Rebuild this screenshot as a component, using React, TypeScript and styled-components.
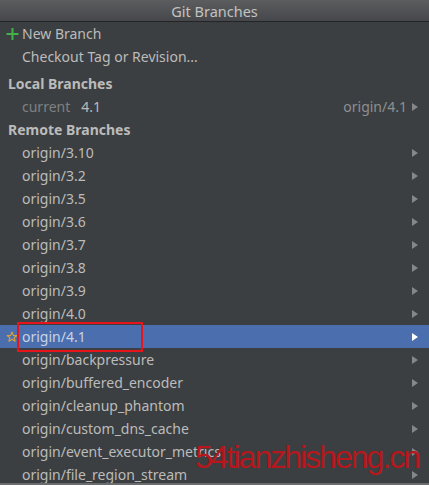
import React from "react";
import styled, { createGlobalStyle } from "styled-components";

const Global = createGlobalStyle`
  html, body { margin: 0; padding: 0; background: #3c3f41; }
  body { font-family: "Noto Sans", "Open Sans", sans-serif; }
`;

const Popup = styled.div`
  position: relative;
  width: 429px;
  height: 485px;
  overflow: hidden;
  background: #3c3f41;
  color: #bbbbbb;
  font-size: 14px;
  border-bottom: 2px solid #6a6c6e;
  box-sizing: border-box;
`;

const TitleBar = styled.div`
  height: 21px;
  display: flex;
  align-items: center;
  justify-content: center;
  background: linear-gradient(#5b5d5f, #45474a);
  border-bottom: 1px solid #232425;
  color: #c2c2c2;
  font-size: 14.5px;
`;

const List = styled.div`
  display: flex;
  flex-direction: column;
`;

const Row = styled.div<{ $selected?: boolean; $header?: boolean }>`
  position: relative;
  height: 23px;
  display: flex;
  align-items: center;
  padding-left: ${(p) => (p.$header ? 8 : 22)}px;
  padding-right: 11px;
  background: ${(p) => (p.$selected ? "#4b6eaf" : "transparent")};
  font-weight: ${(p) => (p.$header ? 700 : 400)};
  color: ${(p) => (p.$selected ? "#c9d3e4" : "#bbbbbb")};
`;

const Separator = styled.div`
  height: 4px;
`;

const Label = styled.span`
  flex: 1;
  white-space: nowrap;
`;

const Muted = styled.span`
  color: #7f8183;
  margin-right: 11px;
`;

const Remote = styled.span`
  color: #8d8f91;
  margin-right: 5px;
`;

const Arrow = styled.span<{ $selected?: boolean }>`
  width: 0;
  height: 0;
  border-top: 4px solid transparent;
  border-bottom: 4px solid transparent;
  border-left: 6px solid ${(p) => (p.$selected ? "#ffffff" : "#85878a")};
`;

const LeadIcon = styled.span`
  position: absolute;
  left: 6px;
  top: 50%;
  transform: translateY(-50%);
  display: flex;
`;

const Highlight = styled.div`
  position: absolute;
  left: 17px;
  top: 322px;
  width: 122px;
  height: 26px;
  border: 2px solid #e8141b;
`;

const Watermark = styled.div`
  position: absolute;
  left: 195px;
  top: 439px;
  font-family: "Liberation Sans", "Noto Sans", sans-serif;
  font-size: 32px;
  letter-spacing: -2px;
  color: #b7171c;
  white-space: nowrap;
`;

const Plus = () => (
  <svg width="13" height="13" viewBox="0 0 13 13">
    <rect x="5.5" y="0.5" width="2" height="12" fill="#44b04b" />
    <rect x="0.5" y="5.5" width="12" height="2" fill="#44b04b" />
  </svg>
);

const Star = () => (
  <svg width="12" height="12" viewBox="0 0 12 12">
    <path
      d="M6 1 L7.3 4.4 L10.9 4.5 L8.1 6.7 L9.1 10.2 L6 8.2 L2.9 10.2 L3.9 6.7 L1.1 4.5 L4.7 4.4 Z"
      fill="none"
      stroke="#d9a23e"
      strokeWidth="1.1"
      strokeLinejoin="round"
    />
  </svg>
);

const remotes = [
  "origin/3.10",
  "origin/3.2",
  "origin/3.5",
  "origin/3.6",
  "origin/3.7",
  "origin/3.8",
  "origin/3.9",
  "origin/4.0",
  "origin/4.1",
  "origin/backpressure",
  "origin/buffered_encoder",
  "origin/cleanup_phantom",
  "origin/custom_dns_cache",
  "origin/event_executor_metrics",
  "origin/file_region_stream",
];

export default function App() {
  return (
    <>
      <Global />
      <Popup>
        <TitleBar>Git Branches</TitleBar>
        <List>
          <Row>
            <LeadIcon>
              <Plus />
            </LeadIcon>
            <Label>New Branch</Label>
          </Row>
          <Row>
            <Label>Checkout Tag or Revision...</Label>
          </Row>
          <Separator />
          <Row $header>
            <Label>Local Branches</Label>
          </Row>
          <Row>
            <Muted>current</Muted>
            <Label>4.1</Label>
            <Remote>origin/4.1</Remote>
            <Arrow />
          </Row>
          <Row $header>
            <Label>Remote Branches</Label>
          </Row>
          {remotes.map((r) => {
            const sel = r === "origin/4.1";
            return (
              <Row key={r} $selected={sel}>
                {sel && (
                  <LeadIcon>
                    <Star />
                  </LeadIcon>
                )}
                <Label>{r}</Label>
                <Arrow $selected={sel} />
              </Row>
            );
          })}
        </List>
        <Highlight />
        <Watermark>54tianzhisheng.cn</Watermark>
      </Popup>
    </>
  );
}
